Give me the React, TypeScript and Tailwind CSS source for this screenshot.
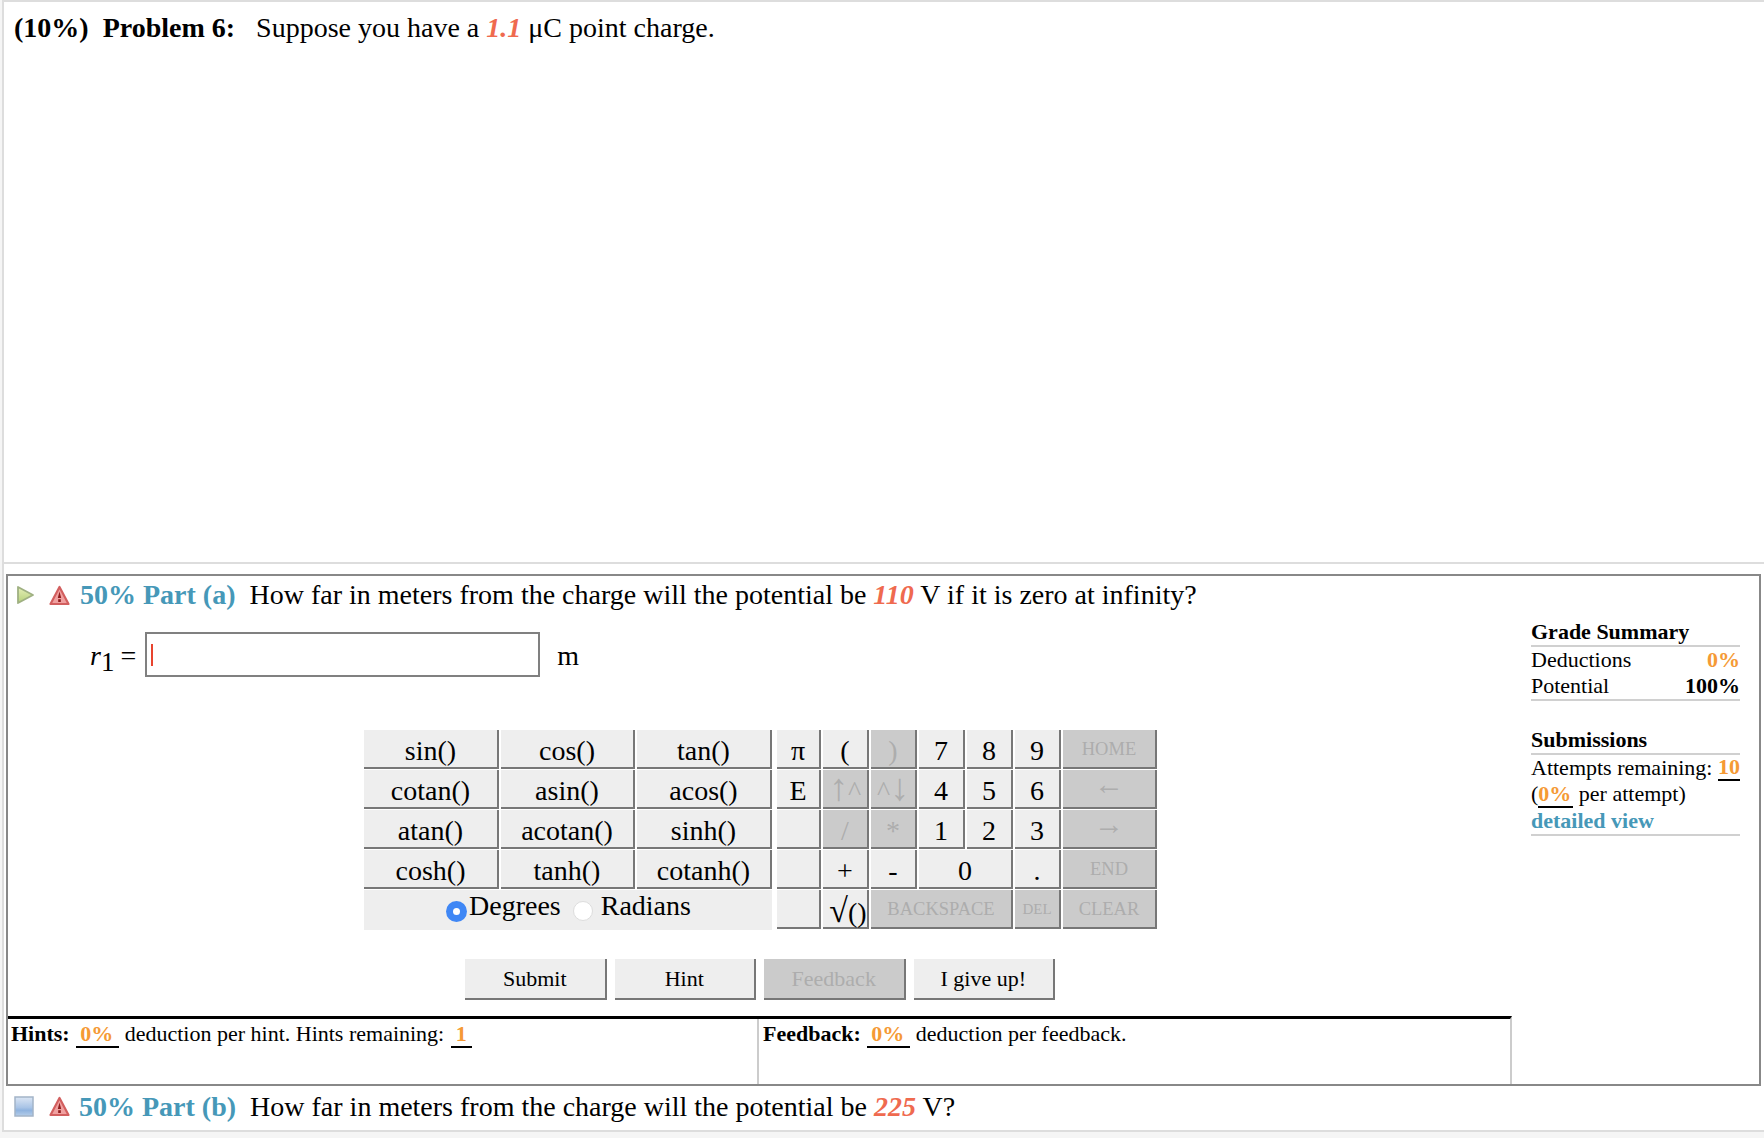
import React from 'react';

const orange = 'text-[#f59a35] font-bold';
const teal = 'text-[#4698b8] font-bold';
const coral = 'text-[#ef6a4f] font-bold italic';

function PlayIcon() {
  return (
    <svg width="19" height="20" viewBox="0 0 19 20" className="shrink-0">
      <defs>
        <linearGradient id="playFill" x1="0" y1="0" x2="0" y2="1">
          <stop offset="0" stopColor="#e6efb8" />
          <stop offset="1" stopColor="#b5d07a" />
        </linearGradient>
      </defs>
      <path d="M2 2 L17 10 L2 18 Z" fill="url(#playFill)" stroke="#9fb082" strokeWidth="1.8" strokeLinejoin="round" />
    </svg>
  );
}

function SquareIcon() {
  return (
    <svg width="20" height="21" viewBox="0 0 20 21" className="shrink-0">
      <defs>
        <linearGradient id="squareFill" x1="0" y1="0" x2="0" y2="1">
          <stop offset="0" stopColor="#dce6f4" />
          <stop offset="0.55" stopColor="#a9c4e6" />
          <stop offset="0.7" stopColor="#8fb3df" />
          <stop offset="1" stopColor="#b5cde9" />
        </linearGradient>
      </defs>
      <rect x="1" y="1" width="18" height="19" fill="url(#squareFill)" stroke="#a3b4c8" strokeWidth="1.5" />
    </svg>
  );
}

function WarnIcon() {
  return (
    <svg width="21" height="21" viewBox="0 0 21 21" className="shrink-0">
      <path d="M10.5 2 L19.5 19 L1.5 19 Z" fill="#f0a0a0" stroke="#d25f5f" strokeWidth="2.2" strokeLinejoin="round" />
      <path d="M10.5 6.5 L12.2 13 L8.8 13 Z" fill="#8f1d1d" />
      <rect x="9.2" y="14.2" width="2.6" height="2.8" fill="#8f1d1d" />
    </svg>
  );
}

function Key({ label, off, small, cls = '' }: { label: React.ReactNode; off?: boolean; small?: boolean; cls?: string }) {
  return (
    <div
      className={
        'flex items-center justify-center border-r-2 border-b-2 border-[#777] ' +
        (small ? 'pt-[2px] ' : 'pt-[5px] ') +
        (off ? 'bg-[#cbcbcb] text-[#adadad] ' : 'bg-[#eeeeee] text-black ') +
        cls
      }
    >
      {label}
    </div>
  );
}

const funcs = ['sin()', 'cos()', 'tan()', 'cotan()', 'asin()', 'acos()', 'atan()', 'acotan()', 'sinh()', 'cosh()', 'tanh()', 'cotanh()'];

function Keypad() {
  const wide = 'text-[18.5px]';
  const arrow = <span className="text-[38px] leading-none -mt-[8px]">↑</span>;
  return (
    <div className="flex ml-[356px] gap-[5px] text-[28px] leading-none">
      <div className="w-[408px]">
        <div className="grid grid-cols-[135px_134px_135px] grid-rows-[39px_39px_39px_39px] gap-x-[2px] gap-y-[1px]">
          {funcs.map((f) => (
            <Key key={f} label={f} />
          ))}
        </div>
        <div className="h-[40px] mt-[1px] bg-[#eeeeee] flex items-center pl-[82px] relative">
          <span className="w-[21px] h-[21px] rounded-full bg-[#3f87f5] flex items-center justify-center mt-[2px]">
            <span className="w-[7px] h-[7px] rounded-full bg-white" />
          </span>
          <span className="ml-[2px] -mt-[8px]">Degrees</span>
          <span className="w-[20px] h-[20px] rounded-full bg-white border border-[#ddd] ml-[12px] mt-[2px]" />
          <span className="ml-[8px] -mt-[8px]">Radians</span>
        </div>
      </div>
      <div className="grid grid-cols-[44px_46px_46px_46px_46px_46px_94px] grid-rows-[39px_39px_39px_39px_39px] gap-x-[2px] gap-y-[1px]">
        <Key label="π" />
        <Key label="(" />
        <Key label=")" off />
        <Key label="7" />
        <Key label="8" />
        <Key label="9" />
        <Key label="HOME" off small cls={wide} />
        <Key label="E" />
        <Key label={<>{arrow}^</>} off />
        <Key label={<>^<span className="text-[38px] leading-none -mt-[8px]">↓</span></>} off />
        <Key label="4" />
        <Key label="5" />
        <Key label="6" />
        <Key label={<span className="text-[30px] leading-none -mt-[12px]">←</span>} off small />
        <Key label="" />
        <Key label="/" off />
        <Key label="*" off />
        <Key label="1" />
        <Key label="2" />
        <Key label="3" />
        <Key label={<span className="text-[30px] leading-none -mt-[12px]">→</span>} off small />
        <Key label="" />
        <Key label="+" />
        <Key label="-" />
        <Key label="0" cls="col-span-2" />
        <Key label="." />
        <Key label="END" off small cls={wide} />
        <Key label="" />
        <Key label={<span className="ml-[6px] whitespace-nowrap"><span className="text-[34px] leading-none">√</span>()</span>} />
        <Key label="BACKSPACE" off small cls={'col-span-3 ' + wide} />
        <Key label="DEL" off small cls="text-[15px]" />
        <Key label="CLEAR" off small cls={wide} />
      </div>
    </div>
  );
}

function ActionButton({ label, off }: { label: string; off?: boolean }) {
  return (
    <button
      type="button"
      className={
        'w-[141.5px] h-[41px] border-r-2 border-b-2 border-[#777] text-[22px] ' +
        (off ? 'bg-[#cbcbcb] text-[#adadad]' : 'bg-[#eeeeee] text-black')
      }
    >
      {label}
    </button>
  );
}

function Value({ children, cls = 'px-[4px]' }: { children: React.ReactNode; cls?: string }) {
  return <span className={'inline-block leading-[24px] border-b-2 border-black ' + orange + ' ' + cls}>{children}</span>;
}

function Sidebar() {
  return (
    <div className="w-[209px] ml-[19px] mt-[5px] text-[22px] leading-[26px] text-black">
      <div className="font-bold border-b-2 border-[#d0d0d0] h-[28px]">Grade Summary</div>
      <div className="flex justify-between">
        <span>Deductions</span>
        <span className={orange}>0%</span>
      </div>
      <div className="flex justify-between border-b-2 border-[#d0d0d0] h-[28px]">
        <span>Potential</span>
        <span className="font-bold">100%</span>
      </div>
      <div className="font-bold border-b-2 border-[#d0d0d0] h-[28px] mt-[26px]">Submissions</div>
      <div className="flex justify-between">
        <span>Attempts remaining:</span>
        <Value cls="">10</Value>
      </div>
      <div className="leading-[25px]">
        (<Value cls="pr-[2px]">0%</Value> per attempt)
      </div>
      <div className={teal + ' border-b-2 border-[#d0d0d0]'}>detailed view</div>
    </div>
  );
}

export default function App() {
  return (
    <div className="w-full h-[1138px] bg-[#f5f5f5] font-['Liberation_Serif',serif] text-black overflow-hidden">
      <div className="h-[1132px] ml-[2px] bg-white border-t-2 border-l-2 border-b-2 border-[#dddddd] flex flex-col">
        <div className="h-[562px] shrink-0 border-b-2 border-[#dddddd] pl-[10px] pt-[9px] text-[28px] leading-[34px]">
          <b>(10%)</b>
          <b className="ml-[14px]">Problem 6:</b>
          <span className="ml-[21px]">
            Suppose you have a <span className={coral}>1.1</span> μC point charge.
          </span>
        </div>

        <div className="h-[512px] shrink-0 mt-[10px] ml-[2px] mr-[3px] border-2 border-[#888888] flex flex-col">
          <div className="h-[38px] flex items-center pl-[8px] text-[28px]">
            <PlayIcon />
            <span className="ml-[14px]"><WarnIcon /></span>
            <span className={teal + ' ml-[10px]'}>50% Part (a)</span>
            <span className="ml-[14px]">
              How far in meters from the charge will the potential be <span className={coral}>110</span> V if it is zero at infinity?
            </span>
          </div>

          <div className="flex flex-1">
            <div className="w-[1504px] flex flex-col">
              <div className="flex items-center h-[45px] mt-[18px] text-[28px]">
                <span className="ml-[82px] italic mt-[2px]">r</span>
                <span className="text-[27px] leading-none mt-[16px]">1</span>
                <span className="ml-[6px] mt-[2px]">=</span>
                <div className="ml-[9px] w-[395px] h-[45px] border-2 border-[#808080] flex items-center pl-[4px]">
                  <span className="w-[2px] h-[22px] bg-[#e8442e]" />
                </div>
                <span className="ml-[17px] mt-[2px]">m</span>
              </div>

              <div className="mt-[53px]">
                <Keypad />
              </div>

              <div className="flex gap-[8px] ml-[457px] mt-[29px]">
                <ActionButton label="Submit" />
                <ActionButton label="Hint" />
                <ActionButton label="Feedback" off />
                <ActionButton label="I give up!" />
              </div>

              <div className="mt-auto h-[68px] border-t-[3px] border-black border-r-2 border-r-[#cccccc] flex text-[22px] leading-[26px]">
                <div className="w-[751px] border-r-2 border-[#cccccc] pl-[3px] pt-[2px]">
                  <b>Hints:</b> <Value cls="pl-[4px] pr-[6px] ml-[1px]">0%</Value> deduction per hint. Hints remaining: <Value cls="px-[5px] ml-[1px]">1</Value>
                </div>
                <div className="pl-[4px] pt-[2px]">
                  <b>Feedback:</b> <Value cls="pl-[4px] pr-[6px] ml-[1px]">0%</Value> deduction per feedback.
                </div>
              </div>
            </div>
            <Sidebar />
          </div>
        </div>

        <div className="flex items-center h-[44px] pl-[10px] pb-[3px] text-[28px]">
          <SquareIcon />
          <span className="ml-[15px]"><WarnIcon /></span>
          <span className={teal + ' ml-[9px]'}>50% Part (b)</span>
          <span className="ml-[14px]">
            How far in meters from the charge will the potential be <span className={coral}>225</span> V?
          </span>
        </div>
      </div>
    </div>
  );
}
